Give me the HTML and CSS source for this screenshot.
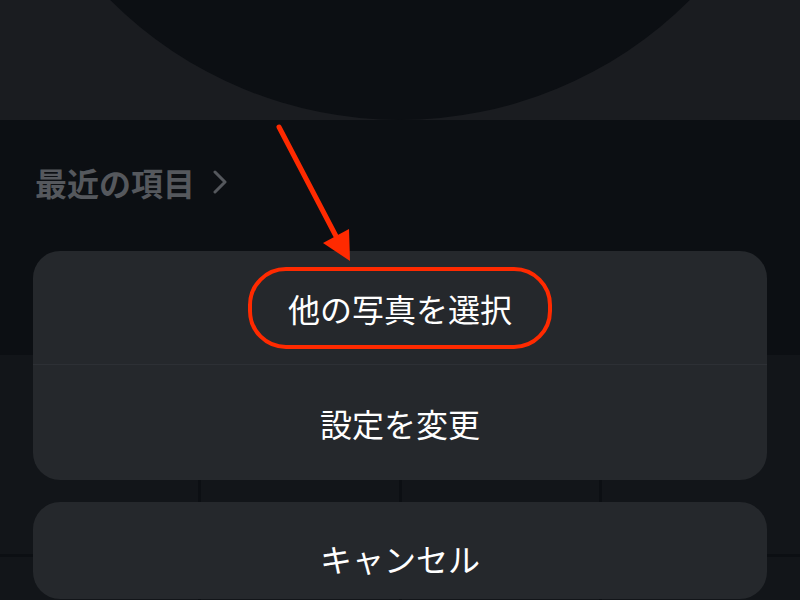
FILE: index.html
```html
<!DOCTYPE html>
<html lang="ja">
<head>
    <meta charset="UTF-8">
    <meta name="viewport" content="width=device-width, initial-scale=1.0">
    <title>写真を選択</title>
    <link rel="stylesheet" href="styles.css">
</head>
<body>

    <!-- Profile header -->
    <header class="hero">
        <div class="avatar"></div>
    </header>

    <!-- Recent items -->
    <section class="recent">
        <h2 class="recent-title">最近の項目
            <svg class="chevron" width="14" height="24" viewBox="0 0 14 24">
                <path d="M2 2 L12 12 L2 22" fill="none" stroke="#55585d" stroke-width="3" stroke-linecap="round" stroke-linejoin="round"/>
            </svg>
        </h2>
    </section>

    <!-- Photo grid -->
    <div class="photo-grid">
        <div class="photo"></div>
        <div class="photo"></div>
        <div class="photo"></div>
        <div class="photo"></div>
        <div class="photo"></div>
        <div class="photo"></div>
        <div class="photo"></div>
        <div class="photo"></div>
    </div>

    <!-- Action sheet -->
    <div class="action-sheet">
        <div class="sheet-group">
            <button class="sheet-button first"><span class="highlight">他の写真を選択</span></button>
            <button class="sheet-button">設定を変更</button>
        </div>
        <div class="sheet-group">
            <button class="sheet-button cancel">キャンセル</button>
        </div>
    </div>

    <!-- Annotation arrow -->
    <svg class="arrow" width="800" height="600" viewBox="0 0 800 600">
        <line x1="279" y1="127" x2="338" y2="240" stroke="#ff2a00" stroke-width="5" stroke-linecap="round"/>
        <polygon points="323,243 349,229 350,261" fill="#ff2a00"/>
    </svg>

</body>
</html>
```

FILE: styles.css
```css
/* General reset */
* {
    margin: 0;
    padding: 0;
    box-sizing: border-box;
    font-family: "Noto Sans CJK JP", "Noto Sans", sans-serif;
}

body {
    position: relative;
    width: 800px;
    height: 600px;
    overflow: hidden;
    background-color: #0c0f13;
    color: #ffffff;
}

/* Header with big avatar circle */
.hero {
    display: flex;
    justify-content: center;
    align-items: flex-end;
    height: 120px;
    overflow: hidden;
    background-color: #1a1c20;
}

.avatar {
    flex-shrink: 0;
    width: 820px;
    height: 820px;
    border-radius: 50%;
    background-color: #0c0f13;
}

/* Recent items title */
.recent {
    height: 233px;
    padding: 42px 0 0 35px;
}

.recent-title {
    display: flex;
    align-items: center;
    gap: 18px;
    font-size: 32px;
    font-weight: bold;
    line-height: 40px;
    color: #55585d;
}

/* Photo grid behind the sheet */
.photo-grid {
    display: grid;
    grid-template-columns: repeat(4, 1fr);
    grid-auto-rows: 199px;
    gap: 3px;
    padding-top: 2px;
}

.photo {
    background-color: #121519;
}

/* Action sheet overlay */
.action-sheet {
    position: absolute;
    top: 251px;
    left: 33px;
    right: 33px;
    display: flex;
    flex-direction: column;
    gap: 22px;
}

.sheet-group {
    display: flex;
    flex-direction: column;
    border-radius: 27px;
    overflow: hidden;
    background-color: #25282c;
}

.sheet-button {
    display: flex;
    justify-content: center;
    align-items: center;
    height: 115px;
    border: none;
    background-color: transparent;
    color: #ffffff;
    font-size: 32px;
    font-weight: normal;
    cursor: pointer;
}

.sheet-button.first {
    height: 114px;
    border-bottom: 1px solid #2d3035;
}

.sheet-button.cancel {
    height: 97px;
    padding-top: 14px;
}

/* Red annotation box */
.highlight {
    display: inline-block;
    padding: 0 36px;
    line-height: 74px;
    border: 4px solid #ff2a00;
    border-radius: 38px;
}

.arrow {
    position: absolute;
    top: 0;
    left: 0;
    pointer-events: none;
}
```
